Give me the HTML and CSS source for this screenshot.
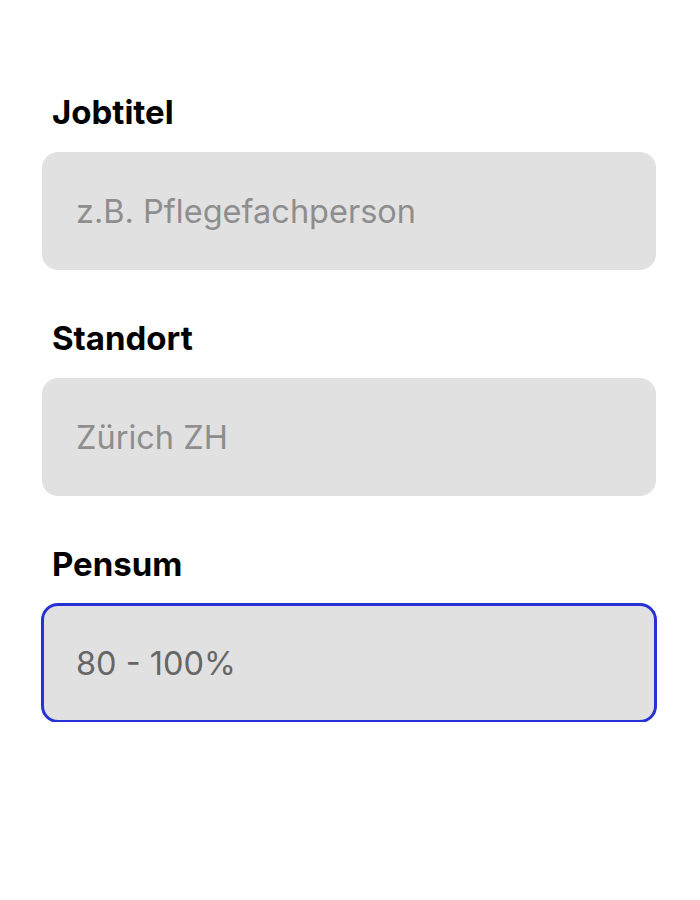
FILE: index.html
```html
<!DOCTYPE html>
<html lang="de">
<head>
<meta charset="utf-8">
<link rel="stylesheet" href="styles.css">
</head>
<body>
<form class="form">
  <div class="field">
    <label class="label" for="job">Jobtitel</label>
    <input class="input" id="job" type="text" placeholder="z.B. Pflegefachperson">
  </div>
  <div class="field">
    <label class="label" for="ort">Standort</label>
    <input class="input" id="ort" type="text" placeholder="Zürich ZH">
  </div>
  <div class="field">
    <label class="label" for="pensum">Pensum</label>
    <div class="input input-focus">80 - 100%</div>
  </div>
</form>
</body>
</html>
```
FILE: styles.css
```css
html, body {
  margin: 0;
  padding: 0;
  background: #ffffff;
  font-family: Inter, "Noto Sans", sans-serif;
}
.form {
  display: flex;
  flex-direction: column;
  gap: 48px;
  width: 614px;
  margin: 0 0 0 42px;
  padding-top: 92px;
}
.field {
  display: flex;
  flex-direction: column;
  gap: 20px;
}
.label {
  font-weight: 700;
  font-size: 33px;
  line-height: 40px;
  color: #000;
  padding-left: 10px;
}
.input {
  box-sizing: border-box;
  width: 614px;
  height: 118px;
  border: 0;
  border-radius: 16px;
  background: #e1e1e1;
  padding: 0 0 0 34px;
  font-family: Inter, "Noto Sans", sans-serif;
  font-size: 32.5px;
  color: #666;
  outline: none;
  display: flex;
  align-items: center;
}
.input::placeholder {
  color: #8e8e8e;
  opacity: 1;
}
.input-focus {
  outline: 3px solid #2631d6;
  outline-offset: -2px;
}
```
